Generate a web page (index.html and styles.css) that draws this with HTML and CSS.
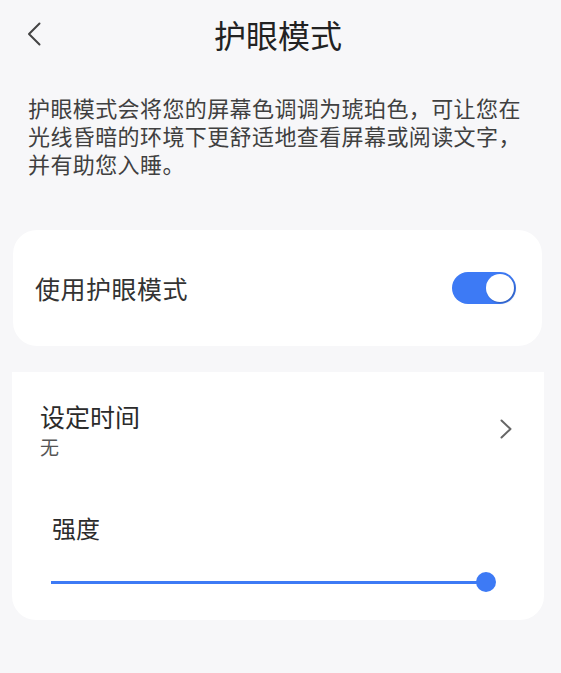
FILE: index.html
```html
<!DOCTYPE html>
<html lang="zh-CN">
<head>
    <meta charset="UTF-8">
    <meta name="viewport" content="width=device-width, initial-scale=1.0">
    <title>护眼模式</title>
    <link rel="stylesheet" href="styles.css">
</head>
<body>
    <div class="header">
        <span class="back">
            <svg width="14" height="24" viewBox="0 0 14 24">
                <path d="M12.5 1.5 L2 12 L12.5 22.5" fill="none" stroke="#444" stroke-width="2" stroke-linecap="round" stroke-linejoin="round"/>
            </svg>
        </span>
        <h1 class="title">护眼模式</h1>
        <span></span>
    </div>

    <p class="intro">护眼模式会将您的屏幕色调调为琥珀色，可让您在光线昏暗的环境下更舒适地查看屏幕或阅读文字，并有助您入睡。</p>

    <div class="card card-switch">
        <span class="label">使用护眼模式</span>
        <span class="toggle on"><span class="knob"></span></span>
    </div>

    <div class="card card-settings">
        <div class="row">
            <div>
                <div class="label">设定时间</div>
                <div class="sub">无</div>
            </div>
            <svg class="chevron" width="12" height="20" viewBox="0 0 12 20">
                <path d="M1.5 1.5 L10.5 10 L1.5 18.5" fill="none" stroke="#666" stroke-width="2" stroke-linecap="round" stroke-linejoin="round"/>
            </svg>
        </div>

        <div class="strength">强度</div>
        <div class="slider">
            <span class="track"></span>
            <span class="thumb"></span>
        </div>
    </div>
</body>
</html>
```

FILE: styles.css
```css
body {
    margin: 0;
    background-color: #f7f7f9;
    font-family: "Noto Sans CJK SC", "Noto Sans", sans-serif;
    color: #333;
}

.header {
    height: 68px;
    display: grid;
    grid-template-columns: 60px 1fr 60px;
    align-items: center;
}

.back {
    display: flex;
    padding-left: 27px;
}

.title {
    margin: 0;
    padding-right: 5px;
    text-align: center;
    font-size: 32px;
    font-weight: normal;
    line-height: 40px;
    color: #222;
}

.intro {
    margin: 25px 30px 0 28px;
    font-size: 22px;
    line-height: 28px;
    letter-spacing: 0.4px;
    color: #404040;
}

.card {
    background-color: #fff;
}

.card-switch {
    margin: 53px 19px 0 13px;
    height: 116px;
    border-radius: 24px;
    padding: 0 26px 0 22px;
    display: flex;
    align-items: center;
    justify-content: space-between;
}

.card-switch .label {
    font-size: 25px;
    letter-spacing: 0.5px;
    line-height: 32px;
}

.toggle {
    width: 64px;
    height: 32px;
    border-radius: 16px;
    background-color: #3d7af5;
    display: flex;
    align-items: center;
    justify-content: flex-end;
    padding: 0 2px;
    box-sizing: border-box;
}

.knob {
    width: 28px;
    height: 28px;
    border-radius: 50%;
    background-color: #fff;
    box-shadow: 1px 1px 2px rgba(0, 0, 0, 0.25);
}

.card-settings {
    margin: 26px 17px 0 12px;
    border-radius: 0 0 24px 24px;
    padding: 29px 32px 28px 0;
}

.row {
    display: flex;
    align-items: center;
    justify-content: space-between;
    padding-left: 28px;
}

.row .label {
    font-size: 25px;
    line-height: 30px;
    color: #2b2b2b;
}

.row .sub {
    margin-top: 3px;
    font-size: 19px;
    line-height: 26px;
    color: #555;
}

.chevron {
    margin-top: -4px;
}

.strength {
    margin-top: 53px;
    padding-left: 40px;
    font-size: 24px;
    line-height: 30px;
    color: #2b2b2b;
}

.slider {
    margin: 29px 16px 0 39px;
    height: 20px;
    display: flex;
    align-items: center;
}

.track {
    flex: 1;
    height: 3px;
    background-color: #3d7af5;
}

.thumb {
    width: 20px;
    height: 20px;
    margin-left: -10px;
    border-radius: 50%;
    background-color: #3d7af5;
}
```
